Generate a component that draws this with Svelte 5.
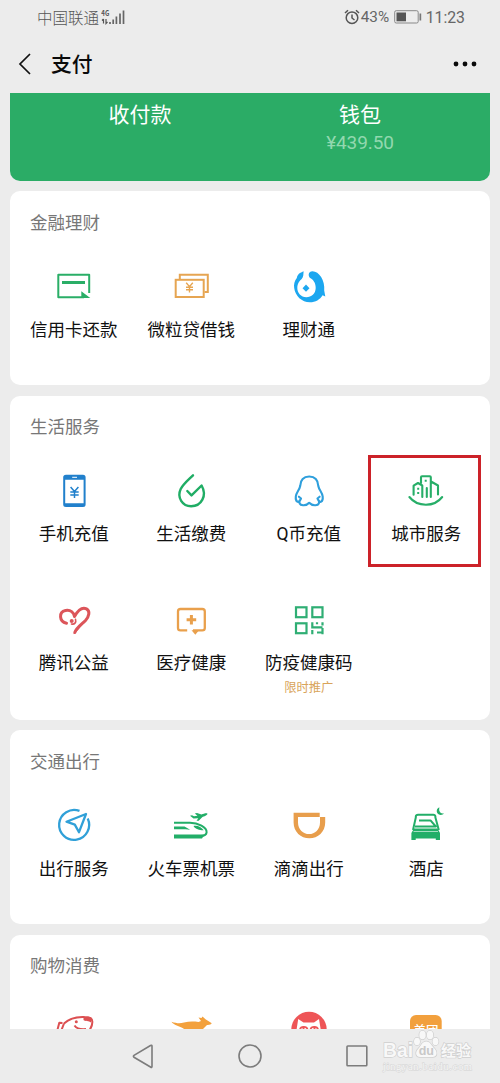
<script>
  const sections = [
    { title: '金融理财', rows: 1, items: [
      { icon: 'card', label: '信用卡还款' },
      { icon: 'loan', label: '微粒贷借钱' },
      { icon: 'wealth', label: '理财通' }
    ] },
    { title: '生活服务', rows: 2, items: [
      { icon: 'phone', label: '手机充值' },
      { icon: 'drop', label: '生活缴费' },
      { icon: 'qq', label: 'Q币充值' },
      { icon: 'city', label: '城市服务', marked: true },
      { icon: 'heart', label: '腾讯公益' },
      { icon: 'medical', label: '医疗健康' },
      { icon: 'qr', label: '防疫健康码', note: '限时推广' }
    ] },
    { title: '交通出行', rows: 1, items: [
      { icon: 'travel', label: '出行服务' },
      { icon: 'train', label: '火车票机票' },
      { icon: 'didi', label: '滴滴出行' },
      { icon: 'hotel', label: '酒店' }
    ] },
    { title: '购物消费', rows: 1, items: [
      { icon: 'fish' }, { icon: 'roo' }, { icon: 'cat' }, { icon: 'meituan' }
    ] }
  ];
</script>

{#snippet glyph(name)}
  <svg class="icon" viewBox="0 0 40 40" fill="none" stroke-linejoin="round">
    {#if name === 'card'}
      <path d="M35.2 27V8.8H4.3V31.2H30" stroke="#2aae67" stroke-width="2" />
      <path d="M8 16.5H31" stroke="#2aae67" stroke-width="3" />
      <path d="M27.3 25.3L36.3 32H27.3z" fill="#2aae67" />
    {:else if name === 'loan'}
      <path d="M8.8 13V8.8H36.8V26H33.5" stroke="#e6a552" stroke-width="2" stroke-linejoin="miter" />
      <rect x="4.7" y="13.8" width="28" height="17.2" stroke="#e6a552" stroke-width="2" stroke-linejoin="miter" />
      <path d="M15.2 16.8L18.5 20.6L21.8 16.8M18.5 20.6V26.4M15 21.2H22M15 23.8H22" stroke="#e6a552" stroke-width="1.4" />
    {:else if name === 'wealth'}
      <path d="M14.6 5.3C13.3 6.2 8.6 7 7.8 12C5.5 15 4.6 18.5 5.2 22C6.2 30 13 36.4 21 36.3C26.5 36.2 31 33.5 33.6 29.2L36.3 30.5L35.2 24.5C36.3 14.5 30 5.3 23.5 5.3C19.3 5.3 18.3 10.5 22 12.6C24.8 14.3 26.8 18 26.7 22C26.5 28 22.500 31.2 17.300 31.2C12 31.2 8.3 27 8.3 22C8.3 17.5 10.5 15 12.7 13C14.7 11 14.300 8.500 14.6 5.3z" fill="#1ca7f0" />
      <path d="M17 18.6L20.500 22.200L17 25.800L13.500 22.200z" fill="#1ca7f0" />
    {:else if name === 'phone'}
      <path fill-rule="evenodd" d="M12 3.7H29Q31.6 3.7 31.6 6.3V33.5Q31.6 36 29 36H12Q9.2 36 9.2 33.5V6.3Q9.2 3.7 12 3.7zM11.2 8.7V32.3H29.6V8.7z" fill="#2180cc" />
      <path d="M18.2 6.3H23" stroke="#fff" stroke-width="1" />
      <path d="M16.6 16L20.5 20.4L24.4 16M20.5 20.4V27M16.3 21H24.7M16.3 24H24.7" stroke="#2180cc" stroke-width="1.5" />
    {:else if name === 'drop'}
      <path d="M22 4.3C17.5 8.8 12.5 12.7 9.7 18C5.7 26.5 11.5 35.2 20.1 35.2C30.5 35.2 36.3 24.5 30.6 14.5L20.5 24.4L16.3 20" stroke="#20ad65" stroke-width="2.4" stroke-linecap="round" />
    {:else if name === 'qq'}
      <path d="M12 27.5C9.5 33.5 6.3 30.5 6.8 25.5C7.2 21.5 10.5 19 11.2 15C11.5 8.5 15 5.5 20.2 5.5C25.5 5.5 29 8.5 29.3 15C30 19 33.3 21.5 33.7 25.5C34.2 30.5 31 33.5 28.5 27.5M12 27.5L9.900 25.7M28.5 27.5L30.6 25.7M11.3 29C9.5 31.5 10.5 34 14 34.2C17 34.4 18.5 33.8 20.2 31.8C22 33.8 23.5 34.4 26.5 34.2C30 34 31 31.5 29.2 29" stroke="#2e9fdc" stroke-width="2.1" stroke-linecap="round" />
    {:else if name === 'city'}
      <g stroke="#27ae68" stroke-width="2.1" stroke-linecap="round">
        <path d="M3.4 26C11.5 36.3 28.3 36.3 36.2 26" />
        <path d="M7.6 23.8V14.7L12 12L16.3 14.5V26" />
        <path d="M15 12V6.3Q15 5.3 16 5.3H23.8Q24.8 5.3 24.8 6.3V26M25 10.5L32 14.5V23.5M20.8 17V26" />
      </g>
      <path d="M11.2 16.7h2v2h-2zM11.2 21h2v2h-2zM18.7 8.8h2v2h-2z" fill="#27ae68" />
    {:else if name === 'heart'}
      <path d="M12.5 23.2C5 21.5 4.5 12 11.5 10.500C16.5 9.5 20 12.5 20.5 16.5C24.5 9.500 29 7.3 32.5 8.9C36.5 11 35 16.5 31.5 20.5C27.5 24.5 22.5 27.5 20.8 32.5" stroke="#dc555a" stroke-width="3" stroke-linecap="round" />
      <path d="M17.5 24C20.5 24.8 22.5 22.5 21.5 19.2" stroke="#dc555a" stroke-width="1.6" stroke-linecap="round" />
      <circle cx="17.7" cy="21" r="2" fill="#dc555a" />
      <path d="M19.2 34.3C21 30.5 25 27 29 24.5C25.5 28 23.5 31.5 19.2 34.3z" fill="#dc555a" />
    {:else if name === 'medical'}
      <path d="M16.2 30.4H9.5Q7 30.4 7 28V11.5Q7 9 9.5 9H31.3Q33.8 9 33.8 11.5V28Q33.8 30.4 31.3 30.4H22" stroke="#e9a04c" stroke-width="2.3" />
      <path d="M20.4 15V24.6M15.6 19.8H25.2" stroke="#e9a04c" stroke-width="3" />
      <path d="M20.5 30.2H28L24.3 34.7z" fill="#e9a04c" />
    {:else if name === 'qr'}
      <g stroke="#2fae74" stroke-width="2.2" stroke-linejoin="miter">
        <rect x="7" y="7.3" width="10.5" height="9.9" />
        <rect x="23.3" y="7.3" width="10.2" height="9.9" />
        <rect x="7" y="23.3" width="10.5" height="9.9" />
        <path d="M23.3 22.2V27.3H33.5M33.5 22.2V25.5M23.3 30V34.2M33.5 28V34.2M28 32.5H34M28 22.2V24.2" />
      </g>
    {:else if name === 'travel'}
      <path d="M25.5 5.9A15 15 0 1 0 33.7 13.5" stroke="#30a0d8" stroke-width="2.3" />
      <path d="M32 9L12.5 16.7L20.8 19.6L25 27.2z" stroke="#30a0d8" stroke-width="2.3" />
    {:else if name === 'train'}
      <path d="M19 10.7L21 10.3L23 11.3L26.5 10.8L23.8 8.6L26 8.1L30.5 9.6C33 8.5 35.5 7.7 36.5 8.8C36.5 10.3 33 11.5 31.2 12.2L27.7 15.8H25.5L27.3 13.3L22.5 13.6z" fill="#22ae68" />
      <path d="M3 17.7H19C27 17.7 36 22.5 35.6 27.3C35.3 30.5 33 30.8 29.8 30.9H3" stroke="#22ae68" stroke-width="2" />
      <path d="M3 29.5H33.5L31 33.6H3zM3 21.5H13.5L19.2 24.8C14 24 8 24.3 3 24.3zM22.5 21C26.5 20 30.5 22.5 32.7 25.2C29 25.3 24.5 24.5 22.5 21z" fill="#22ae68" />
    {:else if name === 'didi'}
      <path fill-rule="evenodd" d="M4.6 7.7H30.7V12H36.2V17.5C36.2 26.8 29 33.3 20.4 33.3S4.6 26.8 4.6 17.5zM9 12V17.5C9 24.5 14.3 29.1 20.1 29.1S31 24.5 31 17.5V12z" fill="#e89e4c" />
    {:else if name === 'hotel'}
      <path d="M7 25L9.8 12.5V11.5Q10 9.7 12 9.7H27.3Q29.2 9.7 29.4 11.5V12.5L32.8 25M13 15.4H24.5L29.800 21.5H9" stroke="#22ae68" stroke-width="2" />
      <path d="M8 23.5H31.5L34 28V35H29.8V33.5H9.7V35H5.4V28z" fill="#22ae68" />
      <path d="M7.5 26.5H32" stroke="#fff" stroke-width=".6" />
      <path d="M33.5 2.6C30.5 3 29.7 7.5 32.5 9.3C34.5 10.6 37 10 38 8.3C34.5 9.3 32.3 6 33.5 2.6z" fill="#22ae68" />
    {:else if name === 'fish'}
      <path d="M10 13.5C15 9 23 6.6 30.5 7C35.5 7 38.8 8.3 38.3 12.5C38.3 15 37 18 35 21M3.400 20L5.300 12.800L8.5 13M10 13.500L7.500 20M20.5 15.5C22.5 18.5 27 19.5 32 19" stroke="#dc5052" stroke-width="2" />
      <path d="M29.5 7.5H37.5L37 12.5C35 10.5 31 11.5 29.5 10z" fill="#dc5052" />
      <circle cx="22.3" cy="11.7" r="1.5" fill="#dc5052" />
    {:else if name === 'roo'}
      <path d="M.4 11.7C6 13.5 9 13.5 13 12.5C18 11.3 23 11.5 27.5 12L30 11L27.5 7.5L30.5 8L31.5 6.6L34.5 9.3L40.8 13.3Q40 15.2 36 15L31 20H14C11 16 3 16 .4 11.7z" fill="#f3a13d" />
    {:else if name === 'cat'}
      <circle cx="20" cy="19.4" r="17.7" fill="#ee5557" />
      <path d="M7.5 20L9.2 9L14.5 12.5H25L30 9L31.8 20z" fill="#fff" />
      <path d="M11 19.5C11.5 16 18 16 18.5 19.5M21.5 19.5C22 16 28.5 16 29 19.5" stroke="#ee5557" stroke-width="1.8" />
      <path d="M14.5 16.5v3M25.5 16.5v3" stroke="#ee5557" stroke-width="2" />
    {:else if name === 'meituan'}
      <rect x="4" y="5" width="31.7" height="31" rx="6" fill="#f2a03d" />
      <text x="19.9" y="25.3" text-anchor="middle" font-size="12.5" font-weight="500" fill="#fff">美团</text>
    {/if}
  </svg>
{/snippet}

<div class="screen">
  <header class="status">
    <div class="carrier">
      <span>中国联通</span>
      <svg width="25" height="18" viewBox="0 0 25 18">
        <text x=".3" y="7.8" font-size="7.5" font-weight="700" fill="#555" textLength="8" lengthAdjust="spacingAndGlyphs">4G</text>
        <path d="M2.5 11v4.5M1 12.5L2.5 11M5 11v4.5L6.5 14" stroke="#555" stroke-width="1.2" fill="none" />
        <path d="M9 16V14M12.2 16V11.5M15.4 16V8.5M19 16V5.5M22.5 16V2.5" stroke="#666" stroke-width="1.7" />
      </svg>
    </div>
    <div class="system">
      <svg width="16" height="16" viewBox="0 0 16 16" fill="none" stroke="#555" stroke-width="1.5">
        <circle cx="8" cy="8.7" r="5.8" /><path d="M8 5.5V9L10.5 11M1 4L4 1.2M15 4L12 1.2" />
      </svg>
      <span class="percent">43%</span>
      <svg class="battery" width="28" height="14" viewBox="0 0 28 14">
        <rect x=".7" y=".7" width="23.5" height="12.3" rx="1.5" fill="none" stroke="#888" />
        <path d="M2.5 2.5H12V11.3H2.5z" fill="#555" /><path d="M25.5 3.5H27.2V10.5H25.5z" fill="#777" />
      </svg>
      <span>11:23</span>
    </div>
  </header>

  <nav class="titlebar">
    <svg width="14" height="22" viewBox="0 0 14 22" fill="none" stroke="#111" stroke-width="1.7"><path d="M12 1L2 11L12 21" /></svg>
    <h1>支付</h1>
    <svg class="more" width="24" height="6" viewBox="0 0 24 6" fill="#0a0a0a"><circle cx="3" cy="3" r="2.4" /><circle cx="12" cy="3" r="2.4" /><circle cx="21" cy="3" r="2.4" /></svg>
  </nav>

  <main>
    <section class="wallet">
      <div>收付款</div>
      <div>钱包<span class="amount">¥439.50</span></div>
    </section>
    {#each sections as section}
      <section class="card" class:double={section.rows === 2}>
        <h2>{section.title}</h2>
        <div class="grid">
          {#each section.items as item}
            <div class="cell" class:marked={item.marked}>
              {@render glyph(item.icon)}
              {#if item.label}<span class="label">{item.label}</span>{/if}
              {#if item.note}<span class="note">{item.note}</span>{/if}
            </div>
          {/each}
        </div>
      </section>
    {/each}
  </main>

  <footer>
    <svg width="22" height="26" viewBox="0 0 22 26"><path d="M20 3V23.5Q20 25 18.5 24L2 14.3Q.8 13.3 2 12.3L18.5 2.5Q20 1.7 20 3z" /></svg>
    <svg width="24" height="26" viewBox="0 0 24 26"><circle cx="12" cy="13" r="11" /></svg>
    <svg width="22" height="26" viewBox="0 0 22 26"><rect x="1" y="3" width="19.8" height="19.8" rx=".8" /></svg>
  </footer>

  <svg class="watermark" width="96" height="52" viewBox="0 0 96 52">
    <g fill="#f8f8f8" stroke="#cfcfcf" stroke-width="1.4" paint-order="stroke">
      <text x="3" y="30.5" font-family="Liberation Sans" font-weight="700" font-size="20" textLength="30" lengthAdjust="spacingAndGlyphs">Bai</text>
      <ellipse cx="37" cy="15.5" rx="3" ry="3.8" /><ellipse cx="42.5" cy="9" rx="3.2" ry="4.3" />
      <ellipse cx="50" cy="9" rx="3.2" ry="4.3" /><ellipse cx="55.5" cy="15.5" rx="3" ry="3.8" />
      <path d="M46.3 15.5C42 15.5 41 20 38.5 22.5C34.5 26.5 36 31 40 31H52.5C57 31 58 26.5 54.5 22.5C51.5 20 50.5 15.5 46.3 15.5z" />
      <text x="61" y="30" font-weight="700" font-size="15">经验</text>
    </g>
    <text x="46.3" y="28.5" text-anchor="middle" font-family="Liberation Sans" font-weight="700" font-size="12.5" fill="#c8c8c8">du</text>
    <text x="3" y="43.5" font-family="Liberation Serif" font-size="10.5" fill="#f6f6f6" stroke="#d4d4d4" stroke-width=".9" paint-order="stroke" textLength="89">jingyan.baidu.com</text>
  </svg>
</div>

<style>
  :global(body) { background: #ececec; }
  .screen { position: relative; width: 500px; height: 1083px; overflow: hidden; display: flex; flex-direction: column; background: #ececec; color: #111; font-family: Roboto, "Noto Sans CJK SC", sans-serif; }
  svg { display: block; flex: none; }
  .status { height: 34px; box-sizing: border-box; padding: 0 35px 0 37px; display: flex; justify-content: space-between; align-items: center; color: #555; font-size: 15.5px; font-weight: 300; }
  .carrier { display: flex; align-items: center; gap: 2px; font-family: "Noto Sans CJK SC", sans-serif; line-height: 34px; }
  .carrier svg { margin-top: -1px; }
  .system { display: flex; align-items: center; font-size: 15.8px; font-weight: 400; line-height: 35px; color: #666; }
  .percent { margin-left: 1px; font-size: 15.3px; }
  .battery { margin: 0 4px 0 4.5px; }
  .titlebar { height: 59px; box-sizing: border-box; padding: 0 23px 0 18px; display: flex; align-items: center; }
  h1 { margin: 2px 0 0 19px; font-size: 20.8px; font-weight: 500; line-height: 30px; color: #0a0a0a; }
  .more { margin-left: auto; }
  main { height: 936px; box-sizing: border-box; padding: 0 10px; overflow: hidden; display: flex; flex-direction: column; gap: 10.5px; }
  .wallet { height: 87.5px; flex: none; display: grid; grid-template-columns: 1fr 1fr; padding: 7px 20px 0; box-sizing: border-box; border-radius: 0 0 10px 10px; background: #2bac66; color: #fff; text-align: center; font-size: 21px; line-height: 30px; }
  .wallet div { display: flex; flex-direction: column; }
  .amount { font-size: 19px; line-height: 26px; letter-spacing: -.1px; color: #92d8af; }
  .card { height: 194px; flex: none; padding: 0 5px; box-sizing: border-box; border-radius: 10px; background: #fff; }
  .card.double { height: 324px; }
  h2 { margin: 0; padding: 18.8px 0 0 15px; height: 65px; box-sizing: border-box; font-size: 17.5px; line-height: 26px; font-weight: 400; color: #777; }
  .grid { display: grid; grid-template-columns: repeat(4, 1fr); grid-auto-rows: 129px; }
  .cell { position: relative; display: flex; flex-direction: column; align-items: center; padding-top: 10px; box-sizing: border-box; }
  .icon { width: 40px; height: 40px; overflow: visible; }
  .label { margin-top: 10.8px; font-size: 17.5px; line-height: 26px; white-space: nowrap; }
  .note { margin-top: 3px; font-size: 12.3px; line-height: 18px; color: #d9a45a; }
  .marked::after { content: ""; position: absolute; left: 0.5px; top: -5.5px; width: 107px; height: 106px; border: 3px solid #cc2229; }
  footer { height: 54px; flex: none; display: flex; justify-content: center; align-items: center; gap: 84px; }
  footer svg { fill: none; stroke: #7c7c7c; stroke-width: 1.6; }
  .watermark { position: absolute; left: 380px; top: 1026px; }
</style>
